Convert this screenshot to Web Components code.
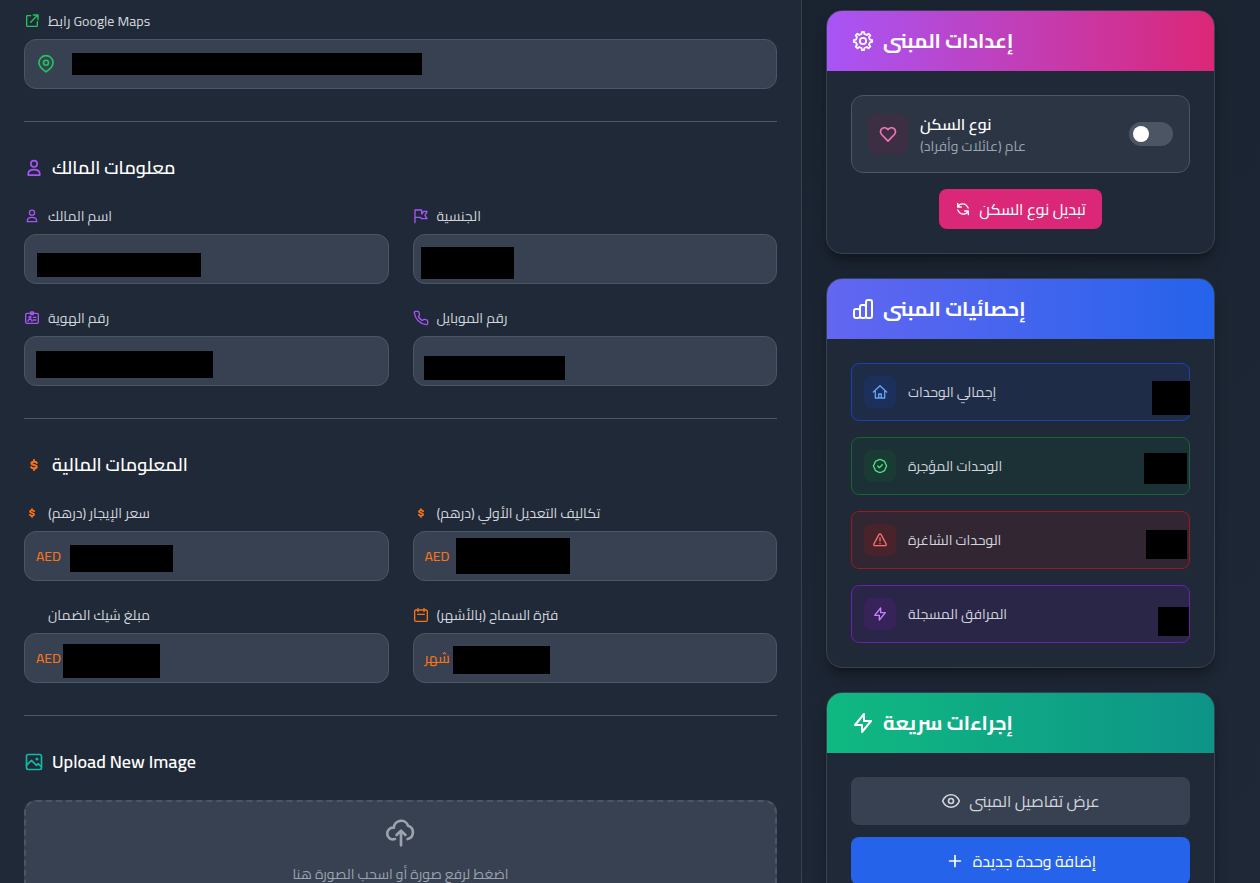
<!DOCTYPE html>
<html lang="ar" dir="ltr">
<head>
<meta charset="utf-8">
<meta name="viewport" content="width=device-width, initial-scale=1">
<title>تعديل المبنى</title>
<style>
  html { scrollbar-width: none; }
  body {
    margin: 0;
    min-height: 100vh;
    background: linear-gradient(to bottom right, #17202d, #1f2836);
    color: #fff;
    font-family: Cairo, Roboto, "DejaVu Sans", sans-serif;
    font-size: 16px;
    line-height: 24px;
  }
</style>
</head>
<body>

<building-page>
  <edit-panel>
    <form-section>
      <form-field wide icon="external" tone="#22c55e" lead="pin">رابط Google Maps
        <redacted-bar slot="mask" style="--x:47px;--y:13px;--w:350px;--h:22px"></redacted-bar>
      </form-field>
    </form-section>

    <form-section icon="user" tone="#a855f7" heading="معلومات المالك">
      <form-field icon="user" tone="#a855f7">اسم المالك
        <redacted-bar slot="mask" style="--x:12px;--y:18px;--w:164px;--h:24px"></redacted-bar>
      </form-field>
      <form-field icon="flag" tone="#a855f7">الجنسية
        <redacted-bar slot="mask" style="--x:7px;--y:12px;--w:93px;--h:32px"></redacted-bar>
      </form-field>
      <form-field icon="idcard" tone="#a855f7">رقم الهوية
        <redacted-bar slot="mask" style="--x:11px;--y:14px;--w:177px;--h:27px"></redacted-bar>
      </form-field>
      <form-field icon="phone" tone="#a855f7">رقم الموبايل
        <redacted-bar slot="mask" style="--x:10px;--y:19px;--w:141px;--h:24px"></redacted-bar>
      </form-field>
    </form-section>

    <form-section icon="dollar" tone="#f97316" heading="المعلومات المالية">
      <form-field icon="dollar" tone="#f97316" unit="AED">سعر الإيجار (درهم)
        <redacted-bar slot="mask" style="--x:45px;--y:13px;--w:103px;--h:27px"></redacted-bar>
      </form-field>
      <form-field icon="dollar" tone="#f97316" unit="AED">تكاليف التعديل الأولي (درهم)
        <redacted-bar slot="mask" style="--x:42px;--y:6px;--w:114px;--h:36px"></redacted-bar>
      </form-field>
      <form-field icon="blank" tone="#f97316" unit="AED">مبلغ شيك الضمان
        <redacted-bar slot="mask" style="--x:38px;--y:10px;--w:97px;--h:34px"></redacted-bar>
      </form-field>
      <form-field icon="calendar" tone="#f97316" unit="شهر">فترة السماح (بالأشهر)
        <redacted-bar slot="mask" style="--x:39px;--y:12px;--w:97px;--h:28px"></redacted-bar>
      </form-field>
    </form-section>

    <form-section icon="image" tone="#14b8a6" heading="Upload New Image">
      <upload-zone>اضغط لرفع صورة أو اسحب الصورة هنا</upload-zone>
    </form-section>
  </edit-panel>

  <side-card slot="side" icon="gear" heading="إعدادات المبنى" style="--from:#a855f7;--to:#db2777;--gap:16px">
    <toggle-row icon="heart" hint="عام (عائلات وأفراد)">نوع السكن</toggle-row>
    <action-button small icon="refresh" style="--bg:#db2777">تبديل نوع السكن</action-button>
  </side-card>

  <side-card slot="side" icon="bars" heading="إحصائيات المبنى" style="--from:#6366f1;--to:#2563eb;--gap:16px">
    <stat-row icon="home" style="--line:#1e40af;--tint:#1e3a8a;--tone:#60a5fa">إجمالي الوحدات
      <redacted-bar slot="mask" style="--x:300px;--y:17px;--w:38px;--h:34px"></redacted-bar>
    </stat-row>
    <stat-row icon="badge" style="--line:#166534;--tint:#14532d;--tone:#4ade80">الوحدات المؤجرة
      <redacted-bar slot="mask" style="--x:292px;--y:15px;--w:43px;--h:31px"></redacted-bar>
    </stat-row>
    <stat-row icon="alert" style="--line:#991b1b;--tint:#7f1d1d;--tone:#f87171">الوحدات الشاغرة
      <redacted-bar slot="mask" style="--x:294px;--y:18px;--w:41px;--h:29px"></redacted-bar>
    </stat-row>
    <stat-row icon="zap" style="--line:#6b21a8;--tint:#581c87;--tone:#c084fc">المرافق المسجلة
      <redacted-bar slot="mask" style="--x:306px;--y:21px;--w:31px;--h:29px"></redacted-bar>
    </stat-row>
  </side-card>

  <side-card slot="side" icon="zap" heading="إجراءات سريعة" style="--from:#10b981;--to:#0d9488;--gap:12px">
    <action-button icon="eye" style="--bg:#374151;--fg:#d1d5db">عرض تفاصيل المبنى</action-button>
    <action-button icon="plus" style="--bg:#2563eb">إضافة وحدة جديدة</action-button>
  </side-card>
</building-page>

<script>
// 24x24 outline icons
const icons = {
  blank: '',
  external: '<path d="M10 4H5a1 1 0 0 0-1 1v14a1 1 0 0 0 1 1h14a1 1 0 0 0 1-1v-6M14 3h7v7M20.500 3.500 10 14"/>',
  pin: '<path d="M12 21.500C7 18 3.500 15 3.500 10.500a8.500 8.500 0 0 1 17 0C20.500 15 17 18 12 21.500z"/><circle cx="12" cy="10.500" r="3"/>',
  user: '<circle cx="12" cy="7" r="3.800"/><path d="M5 20.500v-1c0-3.500 3-5.500 7-5.500s7 2 7 5.500v1z"/>',
  flag: '<path d="M3 22V3h10v6l3-4h5l-3 6 3 5h-8l-2-2H3"/>',
  idcard: '<rect x="2.500" y="5" width="19" height="15" rx="2"/><path d="M10 5V3h4v2M10 7h4M14 11h4M14 15h4M6 17c0-4 6-4 6 0"/><circle cx="9" cy="11" r="1.500"/>',
  phone: '<path d="M22 16.900v3a2 2 0 0 1-2.200 2A19.800 19.800 0 0 1 2 4.200 2 2 0 0 1 4 2h3a2 2 0 0 1 2 1.700c.1 1 .4 1.900.7 2.800a2 2 0 0 1-.5 2.100L8 9.900a16 16 0 0 0 6 6l1.300-1.300a2 2 0 0 1 2.100-.4c.9.3 1.800.6 2.800.7A2 2 0 0 1 22 16.900z"/>',
  dollar: '<path stroke-width="2.600" d="M15.300 9.300c-1.200-1.700-6.300-1.700-6.300.7 0 2.700 6.200 1.300 6.200 4.100 0 2.500-5.200 2.500-6.500.6M12 6.200v1.500M12 16.500v1.500"/>',
  calendar: '<rect x="2.500" y="4.500" width="19" height="17" rx="2"/><path d="M7.500 2v5M16.500 2v5M7 11h10"/>',
  image: '<rect x="3" y="3" width="18" height="18" rx="2"/><path d="m3 16 6-6 6 6 2-2 4 4"/><circle cx="15.500" cy="8.500" r=".8"/>',
  gear: '<g transform="translate(12 12) scale(.92) translate(-12 -12)"><path d="m19.600 10.400-1.100-2.700L20 6l-2-2-1.700 1.500-2.700-1.100L13 2h-2l-.7 2.400-2.600 1.100L6 4 4 6l1.500 1.800-1.100 2.600L2 11v2l2.400.7 1.100 2.600L4 18l2 2 1.800-1.500 2.600 1.100L11 22h2l.6-2.400 2.700-1.100L18 20l2-2-1.500-1.800 1.100-2.600L22 13v-2z"/><circle cx="12" cy="12" r="3.400"/></g>',
  heart: '<path d="M12 20.500 4.400 12.600a4.700 4.700 0 0 1 0-6.700 4.700 4.700 0 0 1 6.700 0l.9.900.9-.9a4.700 4.700 0 0 1 6.700 0 4.700 4.700 0 0 1 0 6.700z"/>',
  refresh: '<path d="M4 3.500V9h5.500M4.500 8.500C7 3 16 2 19.800 10.500M20 20.500V15h-5.500M19.500 15.500C17 21 8 22 4.200 13.500"/>',
  bars: '<rect x="3" y="12" width="6" height="9" rx="2"/><rect x="9" y="8" width="6" height="13" rx="2"/><rect x="15" y="3" width="6" height="18" rx="2"/>',
  home: '<path d="m2 12 10-9.500L22 12M5 10v11h14V10M10 21v-6h4v6"/>',
  badge: '<path d="m12 2 3 1.200 3.800 1.700 1.400 3.600L22 12l-1.800 3.500-1.400 3.600-3.800 1.700L12 22l-3-1.200-3.800-1.700-1.400-3.600L2 12l1.800-3.500 1.400-3.600L9 3.200z"/><path d="m8.500 12 2.500 2.500 4.500-4.500"/>',
  alert: '<path d="M12 3c-.7 0-1.300.4-1.700 1L2.800 18a1.700 1.700 0 0 0 1.500 2.500h15.400a1.700 1.700 0 0 0 1.500-2.500L13.700 4c-.4-.6-1-1-1.700-1zM12 9v4.500M12 17v.2"/>',
  zap: '<path d="M13 3 4 14h7v7l9-11h-7z"/>',
  eye: '<path d="M2 12c2-5 6-7.500 10-7.500S20 7 22 12c-2 5-6 7.500-10 7.500S4 17 2 12z"/><circle cx="12" cy="12" r="3"/>',
  plus: '<path d="M12 5.500v13M5.500 12h13"/>',
  cloud: '<path d="M7.500 17.300a4.400 4.400 0 1 1-.9-8.500 5.500 5.500 0 0 1 10.700-1.500 5.200 5.200 0 0 1-.3 10M12 22V12M8.700 14.300 12 11l3.300 3.300"/>',
}

// opens the shadow root and fills it from a template
class BaseElement extends HTMLElement {
  constructor() {
    super()
    this.attachShadow({mode: 'open'})
  }

  connectedCallback() {
    const template = document.createElement('template')
    template.innerHTML = `<style>*{box-sizing:border-box}:host{box-sizing:border-box}</style>${this.render()}`
    this.shadowRoot.replaceChildren(template.content.cloneNode(true))
  }

  attr(name) {
    return this.getAttribute(name) || ''
  }
}

class UiIcon extends BaseElement {
  render() {
    const size = this.attr('size') || 16
    return `
      <style>
        :host { display: block; flex: none; width: ${size}px; height: ${size}px; }
        svg { display: block; width: 100%; height: 100%; }
      </style>
      <svg viewBox="0 0 24 24" fill="none" stroke="currentColor" stroke-width="2"
        stroke-linecap="round" stroke-linejoin="round" aria-hidden="true">${icons[this.attr('name')]}</svg>`
  }
}

class RedactedBar extends BaseElement {
  render() {
    return `
      <style>
        :host {
          position: absolute;
          left: var(--x);
          top: var(--y);
          width: var(--w);
          height: var(--h);
          background: #000;
        }
      </style>`
  }
}

class BuildingPage extends BaseElement {
  render() {
    return `
      <style>
        :host {
          display: grid;
          grid-template-columns: minmax(0, 1fr) 389px;
          gap: 24px;
          padding-right: 45px;
        }
        aside { display: flex; flex-direction: column; gap: 24px; padding: 10px 0 24px; }
        @media (max-width: 900px) {
          :host { grid-template-columns: minmax(0, 1fr); padding: 0 16px; }
        }
      </style>
      <main><slot></slot></main>
      <aside><slot name="side"></slot></aside>`
  }
}

class EditPanel extends BaseElement {
  render() {
    return `
      <style>
        :host {
          display: flex;
          flex-direction: column;
          gap: 32px;
          min-height: 100%;
          padding: 11px 24px 24px;
          background: #1f2937;
          border-right: 1px solid #374151;
        }
      </style>
      <slot></slot>`
  }
}

class FormSection extends BaseElement {
  render() {
    const heading = this.attr('heading')
    return `
      <style>
        :host { display: block; }
        :host([heading]) { border-top: 1px solid #4b5563; padding-top: 32px; }
        h3 {
          display: flex;
          align-items: center;
          gap: 8px;
          margin: 0 0 24px;
          font-size: 18px;
          font-weight: 600;
          line-height: 28px;
        }
        ui-icon { color: ${this.attr('tone')}; }
        .grid { display: grid; grid-template-columns: repeat(2, minmax(0, 1fr)); gap: 24px; }
        ::slotted([wide]), ::slotted(upload-zone) { grid-column: 1 / -1; }
      </style>
      ${heading ? `<h3><ui-icon name="${this.attr('icon')}" size="20"></ui-icon><span>${heading}</span></h3>` : ''}
      <div class="grid"><slot></slot></div>`
  }
}

class FormField extends BaseElement {
  render() {
    const lead = this.attr('lead')
    const unit = this.attr('unit')
    return `
      <style>
        :host { display: block; }
        label {
          display: flex;
          align-items: center;
          gap: 8px;
          margin-bottom: 8px;
          color: #d1d5db;
          font-size: 14px;
          line-height: 20px;
        }
        ui-icon, .unit { color: ${this.attr('tone')}; }
        .box {
          position: relative;
          display: flex;
          align-items: center;
          gap: 8px;
          height: 50px;
          padding: 0 11px;
          background: #374151;
          border: 1px solid #4b5563;
          border-radius: 12px;
        }
        .unit { font-size: 14px; line-height: 20px; font-weight: 500; }
        input {
          flex: 1;
          min-width: 0;
          height: 100%;
          padding: 0;
          border: 0;
          outline: 0;
          background: none;
          color: #fff;
          font: inherit;
        }
      </style>
      <label for="value"><ui-icon name="${this.attr('icon')}"></ui-icon><span><slot></slot></span></label>
      <div class="box">
        ${lead ? `<ui-icon name="${lead}" size="20"></ui-icon>` : ''}
        ${unit ? `<span class="unit">${unit}</span>` : ''}
        <input id="value" type="text">
        <slot name="mask"></slot>
      </div>`
  }
}

class UploadZone extends BaseElement {
  render() {
    return `
      <style>
        :host { display: block; }
        label {
          display: flex;
          flex-direction: column;
          align-items: center;
          gap: 16px;
          padding: 14px 16px 32px;
          background: #374151;
          border: 2px dashed #4b5563;
          border-radius: 12px;
          color: #9ca3af;
          font-size: 14px;
          line-height: 20px;
          cursor: pointer;
        }
        input { display: none; }
      </style>
      <label for="file"><ui-icon name="cloud" size="32"></ui-icon><span><slot></slot></span></label>
      <input id="file" type="file" accept="image/*">`
  }
}

class SideCard extends BaseElement {
  render() {
    return `
      <style>
        :host {
          display: block;
          overflow: hidden;
          background: #1f2937;
          border: 1px solid #374151;
          border-radius: 16px;
          box-shadow: 0 10px 15px -3px rgba(0, 0, 0, .3), 0 4px 6px -4px rgba(0, 0, 0, .3);
        }
        h2 {
          display: flex;
          align-items: center;
          gap: 8px;
          margin: 0;
          padding: 16px 24px;
          background: linear-gradient(to right, var(--from), var(--to));
          font-size: 20px;
          font-weight: 700;
          line-height: 28px;
        }
        .body { display: flex; flex-direction: column; gap: var(--gap); padding: 24px; }
      </style>
      <h2><ui-icon name="${this.attr('icon')}" size="24"></ui-icon><span>${this.attr('heading')}</span></h2>
      <div class="body"><slot></slot></div>`
  }
}

class ToggleRow extends BaseElement {
  render() {
    return `
      <style>
        :host {
          display: flex;
          align-items: center;
          gap: 12px;
          padding: 16px;
          background: rgba(55, 65, 81, .5);
          border: 1px solid #4b5563;
          border-radius: 12px;
        }
        .tile {
          display: grid;
          place-items: center;
          width: 40px;
          height: 40px;
          border-radius: 8px;
          background: rgba(131, 24, 67, .2);
          color: #f472b6;
        }
        label { flex: 1; font-weight: 600; }
        small { display: block; color: #9ca3af; font-size: 14px; font-weight: 400; line-height: 20px; }
        input {
          appearance: none;
          width: 44px;
          height: 24px;
          margin: 0;
          padding: 4px;
          border-radius: 12px;
          background: #4b5563;
          cursor: pointer;
        }
        input::before {
          content: "";
          display: block;
          width: 16px;
          height: 16px;
          border-radius: 50%;
          background: #fff;
        }
        input:checked { background: #db2777; }
        input:checked::before { margin-left: auto; }
      </style>
      <span class="tile"><ui-icon name="${this.attr('icon')}" size="20"></ui-icon></span>
      <label for="toggle"><slot></slot><small>${this.attr('hint')}</small></label>
      <input id="toggle" type="checkbox" role="switch">`
  }
}

class StatRow extends BaseElement {
  render() {
    return `
      <style>
        :host {
          position: relative;
          display: flex;
          align-items: center;
          gap: 12px;
          padding: 12px;
          border: 1px solid var(--line);
          border-radius: 8px;
          background: color-mix(in srgb, var(--tint) 20%, transparent);
          color: #d1d5db;
          font-size: 14px;
          line-height: 20px;
        }
        .tile {
          display: grid;
          place-items: center;
          width: 32px;
          height: 32px;
          border-radius: 8px;
          background: color-mix(in srgb, var(--tint) 30%, transparent);
          color: var(--tone);
        }
      </style>
      <span class="tile"><ui-icon name="${this.attr('icon')}"></ui-icon></span>
      <span><slot></slot></span>
      <slot name="mask"></slot>`
  }
}

class ActionButton extends BaseElement {
  render() {
    const small = this.hasAttribute('small')
    return `
      <style>
        :host { display: block; }
        :host([small]) { align-self: center; }
        button {
          display: flex;
          align-items: center;
          justify-content: center;
          gap: 8px;
          width: 100%;
          padding: ${small ? 8 : 12}px 16px;
          border: 0;
          border-radius: 8px;
          background: var(--bg);
          color: var(--fg, #fff);
          font: inherit;
          cursor: pointer;
        }
      </style>
      <button type="button"><ui-icon name="${this.attr('icon')}" size="${small ? 16 : 20}"></ui-icon><span><slot></slot></span></button>`
  }
}

customElements.define('ui-icon', UiIcon)
customElements.define('redacted-bar', RedactedBar)
customElements.define('building-page', BuildingPage)
customElements.define('edit-panel', EditPanel)
customElements.define('form-section', FormSection)
customElements.define('form-field', FormField)
customElements.define('upload-zone', UploadZone)
customElements.define('side-card', SideCard)
customElements.define('toggle-row', ToggleRow)
customElements.define('stat-row', StatRow)
customElements.define('action-button', ActionButton)
</script>
</body>
</html>
